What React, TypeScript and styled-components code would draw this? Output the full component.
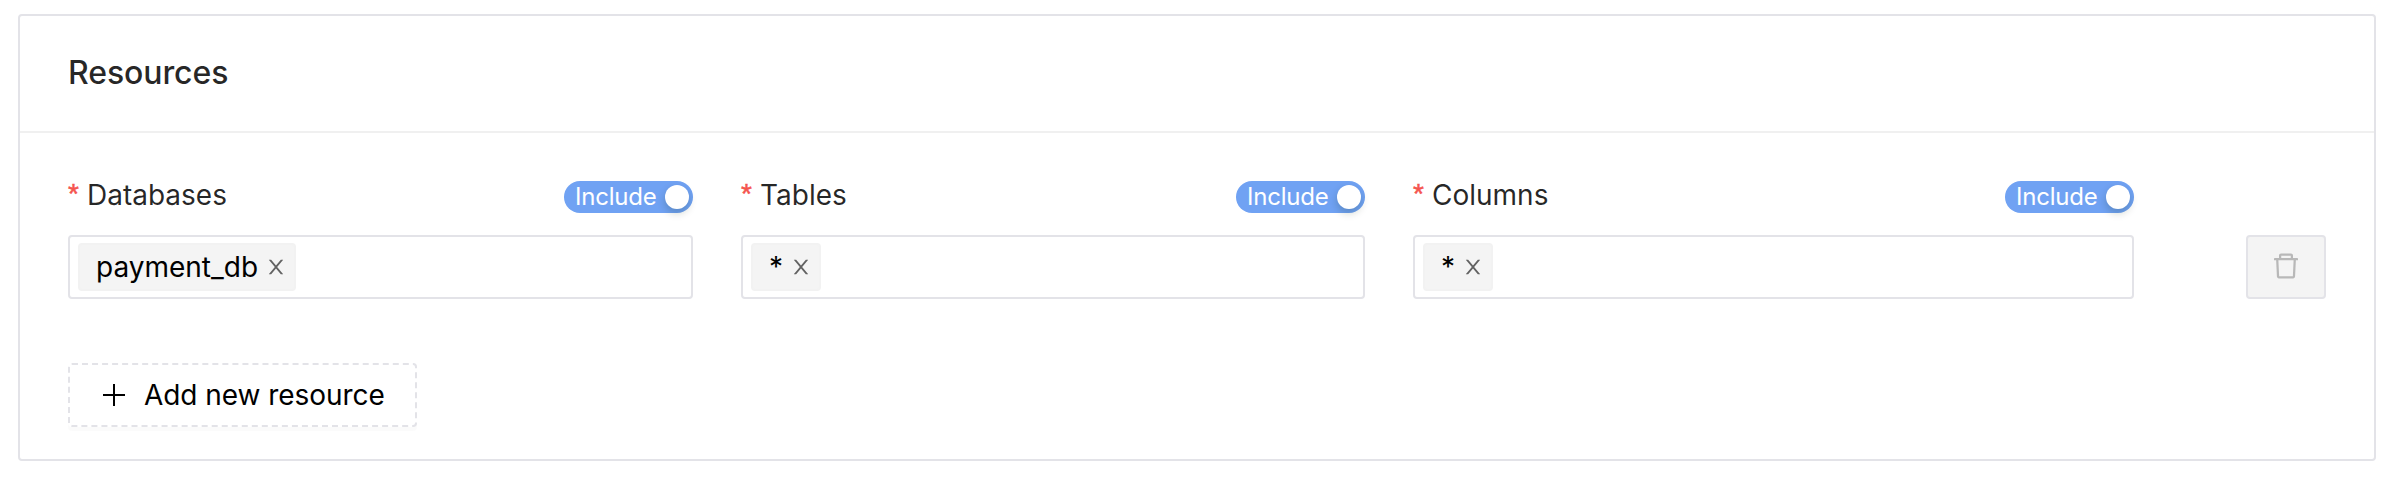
import React from "react";
import styled, { createGlobalStyle } from "styled-components";
import { AiOutlineDelete } from "react-icons/ai";

const GlobalStyle = createGlobalStyle`
  *, *::before, *::after { box-sizing: border-box; }
  body {
    margin: 0;
    background: #fff;
    color: rgba(0, 0, 0, 0.85);
    font-family: Inter, "Liberation Sans", sans-serif;
    font-size: 28px;
    line-height: 44px;
  }
`;

const Card = styled.section`
  margin: 14px 18px 17px;
  height: 447px;
  border: 2px solid #e3e3e8;
  border-radius: 4px;
`;

const CardHeader = styled.header`
  display: flex;
  align-items: center;
  height: 117px;
  padding: 0 48px 2px;
  border-bottom: 2px solid #f0f0f0;
`;

const Title = styled.h2`
  margin: 0;
  font-size: 32px;
  font-weight: 500;
  line-height: 48px;
  letter-spacing: -0.1px;
`;

const CardBody = styled.div`
  padding: 40px 48px 0;
`;

const ResourceRow = styled.div`
  display: flex;
  align-items: flex-end;
  gap: 48px;
`;

const Field = styled.div<{ $width: number }>`
  width: ${(p) => p.$width}px;
`;

const FieldHead = styled.div`
  display: flex;
  align-items: center;
  justify-content: space-between;
  height: 44px;
  margin-bottom: 18px;
`;

const Label = styled.label`
  display: flex;
  align-items: center;
`;

const Required = styled.span`
  width: 19px;
  padding-bottom: 2px;
  color: #f5554e;
  font-family: "Liberation Sans", sans-serif;
  font-size: 28px;
  line-height: 28px;
  -webkit-text-stroke: 0.5px #f5554e;
`;

const Toggle = styled.button`
  display: flex;
  align-items: center;
  justify-content: space-between;
  width: 129px;
  height: 32px;
  margin: 4px 0 0;
  padding: 0 4px 0 11px;
  border: 0;
  border-radius: 16px;
  background: #70a2f3;
  color: #fff;
  font-family: inherit;
  font-size: 24px;
  line-height: 32px;
  letter-spacing: -0.2px;
`;

const Knob = styled.span`
  width: 24px;
  height: 24px;
  border-radius: 50%;
  background: #fff;
  box-shadow: 0 4px 8px rgba(0, 35, 11, 0.2);
`;

const TagInput = styled.div`
  display: flex;
  align-items: center;
  height: 64px;
  padding: 0 8px;
  border: 2px solid #e3e3e8;
  border-radius: 4px;
  background: #fff;
`;

const Tag = styled.span`
  display: flex;
  align-items: center;
  gap: 8px;
  height: 48px;
  padding: 0 8px 0 16px;
  border: 2px solid #f2f2f2;
  border-radius: 4px;
  background: #f4f4f4;
  color: #000;
`;

const CloseIcon = styled.svg`
  width: 20px;
  height: 20px;
  fill: rgba(0, 0, 0, 0.6);
`;

const DeleteButton = styled.button`
  display: flex;
  align-items: center;
  justify-content: center;
  width: 80px;
  height: 64px;
  margin-left: 64px;
  padding: 0 0 2px;
  border: 2px solid #e3e3e8;
  border-radius: 4px;
  background: #f4f4f4;
  color: #b8b8b8;
  font-size: 32px;
`;

const AddButton = styled.button`
  display: flex;
  align-items: center;
  gap: 16px;
  width: 349px;
  height: 64px;
  margin-top: 64px;
  padding: 0 30px;
  border: 2px dashed #e3e3e8;
  border-radius: 4px;
  background: #fff;
  box-shadow: 0 4px 0 rgba(0, 0, 0, 0.016);
  color: #000;
  font: inherit;
  letter-spacing: -0.05px;
  white-space: nowrap;
`;

const PlusIcon = styled.svg`
  width: 28px;
  height: 28px;
  flex: none;
  fill: currentColor;
`;

const fields = [
  { label: "Databases", value: "payment_db", width: 625 },
  { label: "Tables", value: "*", width: 624 },
  { label: "Columns", value: "*", width: 721 },
];

export default function App() {
  return (
    <>
      <GlobalStyle />
      <Card>
        <CardHeader>
          <Title>Resources</Title>
        </CardHeader>
        <CardBody>
          <ResourceRow>
            {fields.map((f) => (
              <Field key={f.label} $width={f.width}>
                <FieldHead>
                  <Label>
                    <Required>*</Required>
                    {f.label}
                  </Label>
                  <Toggle type="button">
                    Include
                    <Knob />
                  </Toggle>
                </FieldHead>
                <TagInput>
                  <Tag>
                    {f.value}
                    <CloseIcon viewBox="64 64 896 896">
                      <path d="M563.8 512l262.5-312.9c4.4-5.2.7-13.1-6.1-13.1h-79.8c-4.7 0-9.2 2.1-12.3 5.7L511.6 449.8 295.1 191.7c-3-3.6-7.5-5.7-12.3-5.7H203c-6.8 0-10.5 7.9-6.1 13.1L459.4 512 196.9 824.9A7.95 7.95 0 00203 838h79.8c4.7 0 9.2-2.1 12.3-5.7l216.5-258.1 216.5 258.1c3 3.6 7.5 5.7 12.3 5.7h79.8c6.8 0 10.5-7.9 6.1-13.1L563.8 512z" />
                    </CloseIcon>
                  </Tag>
                </TagInput>
              </Field>
            ))}
            <DeleteButton type="button" aria-label="Delete">
              <AiOutlineDelete />
            </DeleteButton>
          </ResourceRow>
          <AddButton type="button">
            <PlusIcon viewBox="0 0 28 28">
              <path d="M13 3h2v22h-2zM3 13h22v2H3z" />
            </PlusIcon>
            Add new resource
          </AddButton>
        </CardBody>
      </Card>
    </>
  );
}
